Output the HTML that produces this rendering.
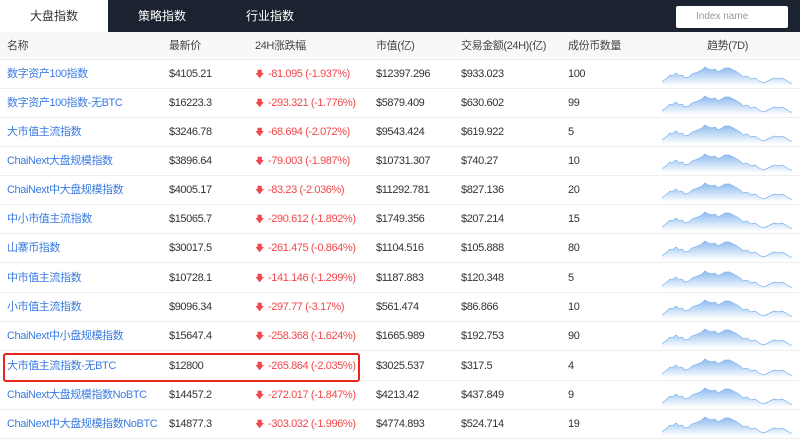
<!DOCTYPE html>
<html><head><meta charset="utf-8"><style>
*{margin:0;padding:0;box-sizing:border-box}
body{width:800px;height:439px;overflow:hidden;background:#fff;font-family:"Liberation Sans","Noto Sans CJK SC",sans-serif;font-size:11px;color:#333;letter-spacing:-0.4px}
.top{position:absolute;left:0;top:0;width:800px;height:32px;background:#1b2330}
.tab{position:absolute;top:0;height:32px;line-height:33px;font-size:12px;color:#fff;text-align:center;letter-spacing:0}
.tab.a{background:#fff;color:#333;left:0;width:108px}
.search{position:absolute;left:676px;top:6px;width:112px;height:22px;background:#fff;border-radius:2px;font-size:10px;color:#999;line-height:22px;padding-left:20px;letter-spacing:0}
.hdr{position:absolute;left:0;top:32px;width:800px;height:28px;background:#f8f8f8;border-bottom:1px solid #eee}
.row{position:absolute;left:0;width:800px;height:29px;border-bottom:1px solid #eee}
.c{position:absolute;top:0;line-height:29px;white-space:nowrap}
.hdr .c{line-height:28px;color:#444}
.n{left:7px;color:#3a7be0}
.p{left:169px}
.ch{left:255px;color:#f2474b}
.m{left:376px}.v{left:461px}.q{left:568px}
.ar{display:inline-block;width:8px;margin-right:5px;font-size:9px}
svg.s{position:absolute;left:662px;top:4px}
.box{position:absolute;left:3px;top:353px;width:357px;height:29px;border:2px solid #e8251d;border-radius:3px}
</style></head><body>
<div class="top"></div>
<div class="tab a">大盘指数</div>
<div class="tab" style="left:124px;width:76px">策略指数</div>
<div class="tab" style="left:232px;width:76px">行业指数</div>
<div class="search">Index name</div>
<div class="hdr"><div class="c" style="left:7px">名称</div><div class="c" style="left:169px">最新价</div><div class="c" style="left:255px">24H涨跌幅</div><div class="c" style="left:376px">市值(亿)</div><div class="c" style="left:461px">交易金额(24H)(亿)</div><div class="c" style="left:568px">成份币数量</div><div class="c" style="left:707px">趋势(7D)</div></div>
<svg width="0" height="0" style="position:absolute"><defs><linearGradient id="g" x1="0" y1="0" x2="0" y2="1"><stop offset="0" stop-color="#8dbbee"/><stop offset="1" stop-color="#fff"/></linearGradient>
<symbol id="sp" viewBox="0 0 130 22"><path d="M0,18 L5,14 L8,11 L10,12 L14,9 L17,12 L20,11 L23,14 L27,13 L30,10 L36,8 L40,6 L43,3 L46,5 L50,6 L53,5 L56,8 L60,6 L63,4 L67,4 L71,6 L75,8 L78,10 L81,13 L85,12 L89,15 L93,14 L97,17 L101,19 L104,18 L108,16 L112,14 L116,15 L120,14 L124,16 L128,19 L130,19 L130,22 L0,22Z" fill="url(#g)" stroke="none"/><path d="M0,18 L5,14 L8,11 L10,12 L14,9 L17,12 L20,11 L23,14 L27,13 L30,10 L36,8 L40,6 L43,3 L46,5 L50,6 L53,5 L56,8 L60,6 L63,4 L67,4 L71,6 L75,8 L78,10 L81,13 L85,12 L89,15 L93,14 L97,17 L101,19 L104,18 L108,16 L112,14 L116,15 L120,14 L124,16 L128,19 L130,19" fill="none" stroke="#7eb2ec" stroke-width="0.7"/></symbol></defs></svg>

<div class="row" style="top:60px"><div class="c n">数字资产100指数</div><div class="c p">$4105.21</div><div class="c ch"><span class="ar">🡇</span>-81.095 (-1.937%)</div><div class="c m">$12397.296</div><div class="c v">$933.023</div><div class="c q">100</div><svg class="s" width="130" height="22"><use href="#sp"/></svg></div>
<div class="row" style="top:89px"><div class="c n">数字资产100指数-无BTC</div><div class="c p">$16223.3</div><div class="c ch"><span class="ar">🡇</span>-293.321 (-1.776%)</div><div class="c m">$5879.409</div><div class="c v">$630.602</div><div class="c q">99</div><svg class="s" width="130" height="22"><use href="#sp"/></svg></div>
<div class="row" style="top:118px"><div class="c n">大市值主流指数</div><div class="c p">$3246.78</div><div class="c ch"><span class="ar">🡇</span>-68.694 (-2.072%)</div><div class="c m">$9543.424</div><div class="c v">$619.922</div><div class="c q">5</div><svg class="s" width="130" height="22"><use href="#sp"/></svg></div>
<div class="row" style="top:147px"><div class="c n">ChaiNext大盘规模指数</div><div class="c p">$3896.64</div><div class="c ch"><span class="ar">🡇</span>-79.003 (-1.987%)</div><div class="c m">$10731.307</div><div class="c v">$740.27</div><div class="c q">10</div><svg class="s" width="130" height="22"><use href="#sp"/></svg></div>
<div class="row" style="top:176px"><div class="c n">ChaiNext中大盘规模指数</div><div class="c p">$4005.17</div><div class="c ch"><span class="ar">🡇</span>-83.23 (-2.036%)</div><div class="c m">$11292.781</div><div class="c v">$827.136</div><div class="c q">20</div><svg class="s" width="130" height="22"><use href="#sp"/></svg></div>
<div class="row" style="top:205px"><div class="c n">中小市值主流指数</div><div class="c p">$15065.7</div><div class="c ch"><span class="ar">🡇</span>-290.612 (-1.892%)</div><div class="c m">$1749.356</div><div class="c v">$207.214</div><div class="c q">15</div><svg class="s" width="130" height="22"><use href="#sp"/></svg></div>
<div class="row" style="top:234px"><div class="c n">山寨币指数</div><div class="c p">$30017.5</div><div class="c ch"><span class="ar">🡇</span>-261.475 (-0.864%)</div><div class="c m">$1104.516</div><div class="c v">$105.888</div><div class="c q">80</div><svg class="s" width="130" height="22"><use href="#sp"/></svg></div>
<div class="row" style="top:264px"><div class="c n">中市值主流指数</div><div class="c p">$10728.1</div><div class="c ch"><span class="ar">🡇</span>-141.146 (-1.299%)</div><div class="c m">$1187.883</div><div class="c v">$120.348</div><div class="c q">5</div><svg class="s" width="130" height="22"><use href="#sp"/></svg></div>
<div class="row" style="top:293px"><div class="c n">小市值主流指数</div><div class="c p">$9096.34</div><div class="c ch"><span class="ar">🡇</span>-297.77 (-3.17%)</div><div class="c m">$561.474</div><div class="c v">$86.866</div><div class="c q">10</div><svg class="s" width="130" height="22"><use href="#sp"/></svg></div>
<div class="row" style="top:322px"><div class="c n">ChaiNext中小盘规模指数</div><div class="c p">$15647.4</div><div class="c ch"><span class="ar">🡇</span>-258.368 (-1.624%)</div><div class="c m">$1665.989</div><div class="c v">$192.753</div><div class="c q">90</div><svg class="s" width="130" height="22"><use href="#sp"/></svg></div>
<div class="row" style="top:352px"><div class="c n">大市值主流指数-无BTC</div><div class="c p">$12800</div><div class="c ch"><span class="ar">🡇</span>-265.864 (-2.035%)</div><div class="c m">$3025.537</div><div class="c v">$317.5</div><div class="c q">4</div><svg class="s" width="130" height="22"><use href="#sp"/></svg></div>
<div class="row" style="top:381px"><div class="c n">ChaiNext大盘规模指数NoBTC</div><div class="c p">$14457.2</div><div class="c ch"><span class="ar">🡇</span>-272.017 (-1.847%)</div><div class="c m">$4213.42</div><div class="c v">$437.849</div><div class="c q">9</div><svg class="s" width="130" height="22"><use href="#sp"/></svg></div>
<div class="row" style="top:410px"><div class="c n">ChaiNext中大盘规模指数NoBTC</div><div class="c p">$14877.3</div><div class="c ch"><span class="ar">🡇</span>-303.032 (-1.996%)</div><div class="c m">$4774.893</div><div class="c v">$524.714</div><div class="c q">19</div><svg class="s" width="130" height="22"><use href="#sp"/></svg></div>
<div class="box"></div>
</body></html>
